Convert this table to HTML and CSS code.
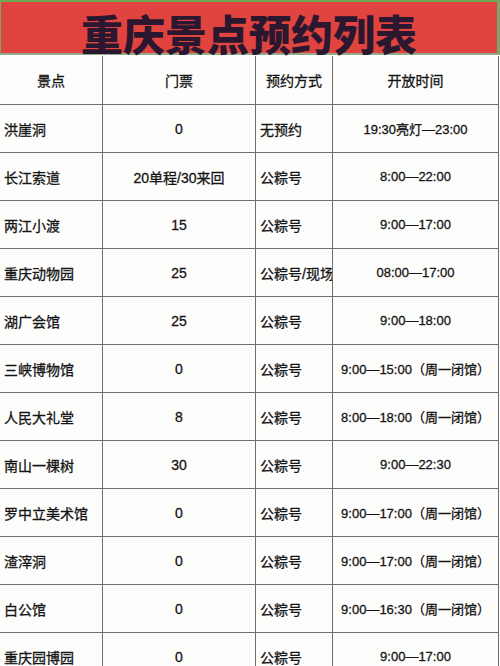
FILE: index.html
```html
<!DOCTYPE html>
<html lang="zh-CN">
<head>
<meta charset="utf-8">
<title>重庆景点预约列表</title>
<link rel="stylesheet" href="styles.css">
</head>
<body>
<div class="page">
  <div class="banner"><h1 class="title">重庆景点预约列表</h1></div>
  <div class="grid">
    <div class="cell head">景点</div><div class="cell head">门票</div><div class="cell head">预约方式</div><div class="cell head">开放时间</div>

    <div class="cell left">洪崖洞</div><div class="cell center">0</div><div class="cell left">无预约</div><div class="cell center time">19:30亮灯—23:00</div>
    <div class="cell left">长江索道</div><div class="cell center">20单程/30来回</div><div class="cell left">公粽号</div><div class="cell center time">8:00—22:00</div>
    <div class="cell left">两江小渡</div><div class="cell center">15</div><div class="cell left">公粽号</div><div class="cell center time">9:00—17:00</div>
    <div class="cell left">重庆动物园</div><div class="cell center">25</div><div class="cell left">公粽号/现场买票</div><div class="cell center time">08:00—17:00</div>
    <div class="cell left">湖广会馆</div><div class="cell center">25</div><div class="cell left">公粽号</div><div class="cell center time">9:00—18:00</div>
    <div class="cell left">三峡博物馆</div><div class="cell center">0</div><div class="cell left">公粽号</div><div class="cell center time">9:00—15:00（周一闭馆）</div>
    <div class="cell left">人民大礼堂</div><div class="cell center">8</div><div class="cell left">公粽号</div><div class="cell center time">8:00—18:00（周一闭馆）</div>
    <div class="cell left">南山一棵树</div><div class="cell center">30</div><div class="cell left">公粽号</div><div class="cell center time">9:00—22:30</div>
    <div class="cell left">罗中立美术馆</div><div class="cell center">0</div><div class="cell left">公粽号</div><div class="cell center time">9:00—17:00（周一闭馆）</div>
    <div class="cell left">渣滓洞</div><div class="cell center">0</div><div class="cell left">公粽号</div><div class="cell center time">9:00—17:00（周一闭馆）</div>
    <div class="cell left">白公馆</div><div class="cell center">0</div><div class="cell left">公粽号</div><div class="cell center time">9:00—16:30（周一闭馆）</div>
    <div class="cell left">重庆园博园</div><div class="cell center">0</div><div class="cell left">公粽号</div><div class="cell center time">9:00—17:00</div>
  </div>
</div>
</body>
</html>
```

FILE: styles.css
```css
html, body {
  margin: 0;
  padding: 0;
  background: #ffffff;
}

.page {
  width: 500px;
  height: 666px;
  overflow: hidden;
  font-family: "Liberation Sans", "Noto Sans CJK SC", sans-serif;
  color: #141414;
}

.banner {
  box-sizing: border-box;
  height: 55px;
  background: #e1443f;
  border-top: 2px solid #6aaa52;
  border-left: 1px solid #7aa86a;
  border-right: 3px solid #7aa86a;
  border-bottom: 2px solid #93a98a;
  display: flex;
  justify-content: center;
  align-items: center;
}

.title {
  margin: 0;
  padding-top: 10px;
  font-family: "Noto Sans CJK SC", sans-serif;
  font-weight: 900;
  font-size: 42px;
  line-height: 44px;
  color: #2b1730;
}

.grid {
  margin-top: 1px;
  width: 499px;
  box-sizing: border-box;
  border-right: 1px solid #6f6f6f;
  display: grid;
  grid-template-columns: 102px 152px 76px 165px;
  grid-template-rows: 48px;
  grid-auto-rows: 47px;
  gap: 1px;
  background: #6f6f6f;
}

.cell {
  background: #fdfdfc;
  display: flex;
  align-items: center;
  font-size: 14px;
  font-weight: 400;
  -webkit-text-stroke: 0.3px currentColor;
  white-space: nowrap;
  overflow: hidden;
}

.head {
  justify-content: center;
}

.left {
  padding-left: 4px;
}

.center {
  justify-content: center;
}

.time {
  font-size: 13px;
}
```
